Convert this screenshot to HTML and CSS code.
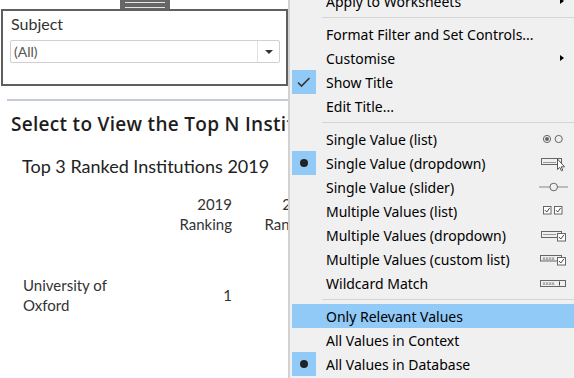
FILE: index.html
```html
<!DOCTYPE html>
<html lang="en">
  <head>
    <meta charset="UTF-8" />
    <title>Filter menu</title>
    <link rel="stylesheet" href="styles.css">
  </head>
  <body>
    <div class="page">
      <div class="panel">
        <div class="filter">
          <div class="grip"></div>
          <div class="filter-label">Subject</div>
          <div class="select">
            <span class="select-value">(All)</span>
            <span class="select-btn"></span>
          </div>
        </div>
        <div class="rule"></div>
        <h1 class="heading">Select to View the Top N Institutions</h1>
        <h2 class="subheading">Top 3 Ranked Institutions 2019</h2>
        <div class="table">
          <div class="th"></div>
          <div class="th num">2019<br>Ranking</div>
          <div class="th num">2018<br>Ranking</div>
          <div class="td name">University of Oxford</div>
          <div class="td num">1</div>
          <div class="td num">1</div>
        </div>
      </div>

      <div class="menu">
        <div class="list">
          <div class="item"><span class="mark"></span><span class="label">Apply to Worksheets</span><span class="sub"></span></div>
          <div class="sep"></div>
          <div class="item"><span class="mark"></span><span class="label">Format Filter and Set Controls...</span></div>
          <div class="item"><span class="mark"></span><span class="label">Customise</span><span class="sub"></span></div>
          <div class="item">
            <span class="mark on">
              <svg width="24" height="24" viewBox="0 0 24 24"><path d="M6 12.5 L9.5 16 L17.5 8" fill="none" stroke="#333" stroke-width="1.6"/></svg>
            </span>
            <span class="label">Show Title</span>
          </div>
          <div class="item"><span class="mark"></span><span class="label">Edit Title...</span></div>
          <div class="sep"></div>

          <div class="item">
            <span class="mark"></span><span class="label">Single Value (list)</span>
            <svg class="ic" width="30" height="24" viewBox="0 0 30 24">
              <circle cx="8" cy="12" r="3.6" fill="none" stroke="#666"/>
              <circle cx="8" cy="12" r="2" fill="#666"/>
              <circle cx="19.7" cy="12" r="3.6" fill="none" stroke="#666"/>
            </svg>
          </div>
          <div class="item">
            <span class="mark on"><span class="dot"></span></span><span class="label">Single Value (dropdown)</span>
            <svg class="ic" width="30" height="24" viewBox="0 0 30 24">
              <rect x="2.5" y="7.5" width="20" height="6" fill="none" stroke="#666"/>
              <path d="M4 11.5 H17" stroke="#999"/>
              <path d="M18.5 8 V18.5 L20.8 16.3 L22.4 19.8 L23.8 19.2 L22.3 15.8 L25.5 15.8 Z" fill="#fff" stroke="#444" stroke-width="0.9" stroke-linejoin="round"/>
            </svg>
          </div>
          <div class="item">
            <span class="mark"></span><span class="label">Single Value (slider)</span>
            <svg class="ic" width="30" height="24" viewBox="0 0 30 24">
              <path d="M0 12 H29" stroke="#bbb" stroke-width="2"/>
              <circle cx="14.7" cy="12" r="3.8" fill="#f0f0f0" stroke="#666"/>
            </svg>
          </div>
          <div class="item">
            <span class="mark"></span><span class="label">Multiple Values (list)</span>
            <svg class="ic" width="30" height="24" viewBox="0 0 30 24">
              <rect x="4.5" y="7.5" width="7.5" height="7.5" fill="#fff" stroke="#666"/>
              <path d="M6 11.2 L7.8 13 L10.6 9" fill="none" stroke="#444"/>
              <rect x="15.5" y="7.5" width="7.5" height="7.5" fill="#fff" stroke="#666"/>
              <path d="M17 11.2 L18.8 13 L21.6 9" fill="none" stroke="#444"/>
            </svg>
          </div>
          <div class="item">
            <span class="mark"></span><span class="label">Multiple Values (dropdown)</span>
            <svg class="ic" width="30" height="24" viewBox="0 0 30 24">
              <rect x="2.5" y="8.5" width="20" height="6" fill="none" stroke="#666"/>
              <path d="M4 11.5 H17" stroke="#999"/>
              <rect x="18.5" y="10.5" width="8" height="7.5" fill="#fff" stroke="#666"/>
              <path d="M20 14 L21.8 16 L25 11.8" fill="none" stroke="#444"/>
            </svg>
          </div>
          <div class="item">
            <span class="mark"></span><span class="label">Multiple Values (custom list)</span>
            <svg class="ic" width="30" height="24" viewBox="0 0 30 24">
              <rect x="1.5" y="8.5" width="21" height="5.5" fill="none" stroke="#666"/>
              <text x="3.5" y="13" class="tiny">xxxx</text>
              <rect x="18.5" y="10.5" width="8" height="7.5" fill="#fff" stroke="#666"/>
              <path d="M20 14 L21.8 16 L25 11.8" fill="none" stroke="#444"/>
            </svg>
          </div>
          <div class="item">
            <span class="mark"></span><span class="label">Wildcard Match</span>
            <svg class="ic" width="30" height="24" viewBox="0 0 30 24">
              <rect x="1.5" y="9.5" width="25" height="6" fill="none" stroke="#666"/>
              <text x="3.5" y="14.2" class="tiny">xxxx</text>
              <path d="M20.5 10.5 V14.5" stroke="#444"/>
            </svg>
          </div>
          <div class="sep"></div>

          <div class="item active"><span class="mark"></span><span class="label">Only Relevant Values</span></div>
          <div class="item"><span class="mark"></span><span class="label">All Values in Context</span></div>
          <div class="item"><span class="mark on"><span class="dot"></span></span><span class="label">All Values in Database</span></div>
        </div>
      </div>
    </div>
  </body>
</html>
```

FILE: styles.css
```css
*{
    box-sizing: border-box;
    margin: 0;
    padding: 0;
}
body{
    width: 574px;
    height: 378px;
    overflow: hidden;
    background: #fff;
}
.page{
    display: flex;
    height: 378px;
}

/* left dashboard */
.panel{
    width: 288px;
    flex: none;
    overflow: hidden;
    font-family: Lato, "Liberation Sans", sans-serif;
    color: #333;
}
.filter{
    position: relative;
    margin: 9px 0 0 1px;
    width: 287px;
    height: 77px;
    border: 2px solid #5f5f5f;
    padding: 1px 6px 0 7px;
}
.grip{
    position: absolute;
    top: -11px;
    left: 117px;
    width: 50px;
    height: 9px;
    background: #666;
}
.grip::before{
    content: '';
    position: absolute;
    left: 5px;
    right: 5px;
    top: 2px;
    height: 4px;
    border-top: 1px solid #e4e4e4;
    border-bottom: 1px solid #e4e4e4;
}
.filter-label{
    font-size: 16px;
    line-height: 20px;
    padding-left: 1px;
    margin-top: 2px;
    color: #333;
}
.select{
    display: flex;
    margin-top: 6px;
    height: 23px;
    border: 1px solid #d0d0d0;
    border-radius: 2px;
}
.select-value{
    flex: 1;
    padding-left: 3px;
    font-size: 14px;
    line-height: 21px;
    color: #555;
}
.select-btn{
    width: 22px;
    border-left: 1px solid #e0e0e0;
    display: flex;
    align-items: center;
    justify-content: center;
}
.select-btn::before{
    content: '';
    border-left: 4px solid transparent;
    border-right: 4px solid transparent;
    border-top: 4px solid #333;
}
.rule{
    margin: 13px 0 0 7px;
    height: 2px;
    background: #c4cad8;
}
.heading{
    margin: 11px 0 0 11px;
    font-family: "Open Sans", Lato, sans-serif;
    font-size: 19px;
    line-height: 24px;
    font-weight: 600;
    letter-spacing: 0.3px;
    color: #1e1e1e;
    white-space: nowrap;
}
.subheading{
    margin: 19px 0 0 22px;
    font-size: 18px;
    line-height: 22px;
    font-weight: 400;
    color: #222;
    white-space: nowrap;
}
.table{
    display: grid;
    grid-template-columns: 124px 85px 85px;
    margin: 17px 0 0 23px;
    align-items: center;
    font-size: 15px;
    line-height: 20px;
    color: #333;
}
.th{
    white-space: nowrap;
}
.num{
    text-align: right;
}
.td{
    margin-top: 41px;
}
.name{
    padding-right: 26px;
}

/* context menu */
.menu{
    flex: 1;
    background: #f0f0f0;
    border-left: 2px solid #d2d2d2;
    padding-left: 2px;
    overflow: hidden;
    font-family: "Noto Sans", "Open Sans", sans-serif;
    font-size: 14px;
    color: #000;
}
.list{
    margin-top: -11px;
}
.item{
    display: flex;
    align-items: center;
    height: 24px;
    white-space: nowrap;
}
.item.active{
    background: #91c9f7;
}
.mark{
    width: 24px;
    height: 24px;
    flex: none;
    display: flex;
    align-items: center;
    justify-content: center;
}
.mark.on{
    background: #91c9f7;
}
.dot{
    width: 8px;
    height: 8px;
    border-radius: 50%;
    background: #222;
}
.label{
    margin-left: 10px;
}
.sub{
    margin-left: auto;
    margin-right: 10px;
    border-top: 3.5px solid transparent;
    border-bottom: 3.5px solid transparent;
    border-left: 4px solid #000;
}
.ic{
    margin-left: auto;
    margin-right: 5px;
    flex: none;
}
.tiny{
    font-family: "DejaVu Sans", sans-serif;
    font-size: 5px;
    fill: #555;
}
.sep{
    height: 9px;
    padding-top: 4px;
    margin-left: 30px;
}
.sep::before{
    content: '';
    display: block;
    height: 1px;
    background: #d5d5d5;
}
```
